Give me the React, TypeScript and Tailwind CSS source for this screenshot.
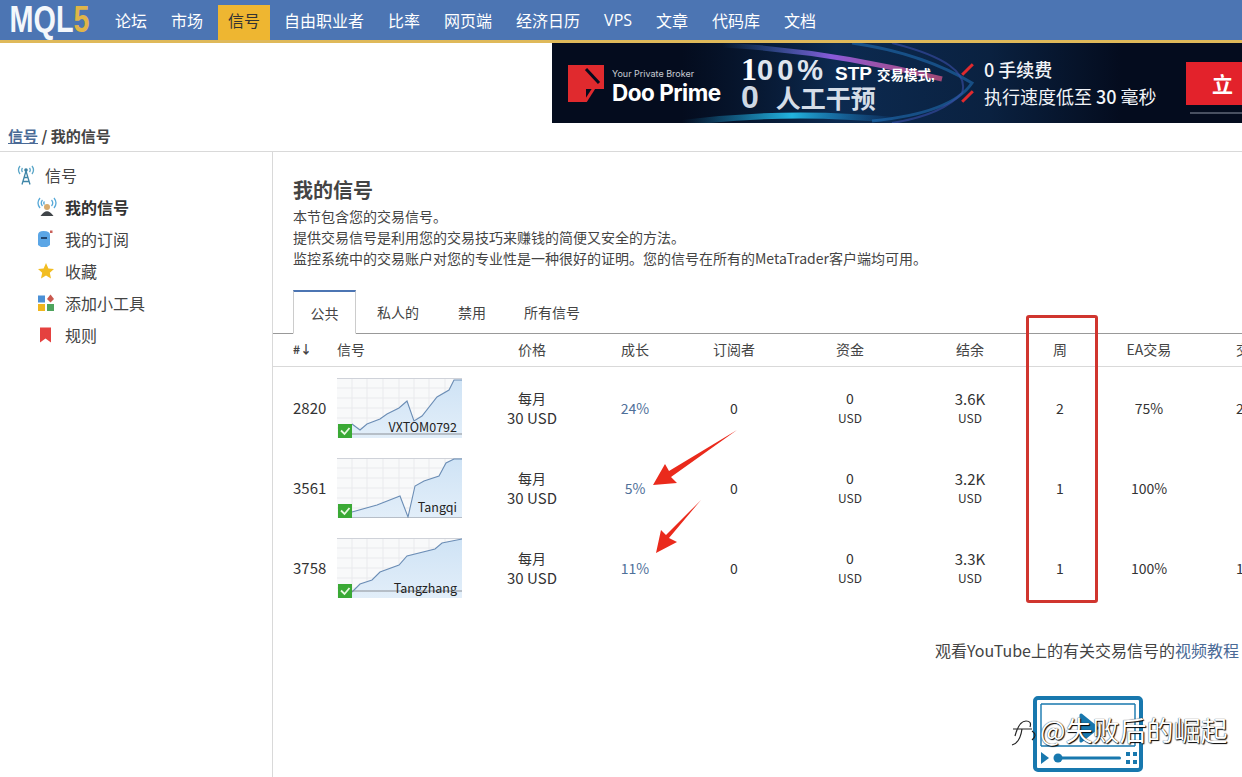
import React from 'react';

const navItems = ['论坛', '市场', '信号', '自由职业者', '比率', '网页端', '经济日历', 'VPS', '文章', '代码库', '文档'];

const cols = 'grid grid-cols-[64px_150px_90px_116px_82px_150px_90px_90px_88px_94px] items-center';

const signals = [
  {
    id: '2820',
    name: 'VXTOM0792',
    line: '15,46 23,52 30,46 43,41 50,36 62,30 70,23 77,43 85,38 100,19 112,12 117,2 125,2',
    base: 56,
    nameClass: 'top-[41px]',
    growth: '24%',
    balance: '3.6K',
    weeks: '2',
    ea: '75%',
    last: '2',
  },
  {
    id: '3561',
    name: 'Tangqi',
    line: '15,54 40,47 63,38 71,59 78,28 87,23 102,18 109,5 117,1 125,1',
    base: 60,
    nameClass: 'top-[41px]',
    growth: '5%',
    balance: '3.2K',
    weeks: '1',
    ea: '100%',
    last: '',
  },
  {
    id: '3758',
    name: 'Tangzhang',
    line: '15,54 23,46 35,42 43,34 62,27 70,18 98,11 105,5 125,1',
    base: 53,
    nameClass: 'top-[42px]',
    growth: '11%',
    balance: '3.3K',
    weeks: '1',
    ea: '100%',
    last: '1',
  },
];

const Thumb = ({ s }: { s: (typeof signals)[number] }) => (
  <div className="relative w-[125px] h-[60px]">
    <svg width="125" height="60" viewBox="0 0 125 60" className="block">
      <defs>
        <linearGradient id={`area${s.id}`} x1="0" y1="0" x2="0" y2="1">
          <stop offset="0" stopColor="#cfe3f5" />
          <stop offset="1" stopColor="#e2eef9" />
        </linearGradient>
      </defs>
      <rect width="125" height="60" fill="#f8f9fa" />
      {[15, 30, 46, 62, 77, 92, 108].map(x => (
        <line key={x} x1={x} y1="0" x2={x} y2="60" stroke="#e9eaed" />
      ))}
      {[10, 20, 30, 40, 50].map(y => (
        <line key={y} x1="0" y1={y} x2="125" y2={y} stroke="#e9eaed" />
      ))}
      <line x1="0" y1="0.5" x2="125" y2="0.5" stroke="#cfd2d9" />
      <polygon points={`15,60 ${s.line} 125,60`} fill={`url(#area${s.id})`} />
      <polyline points={s.line} fill="none" stroke="#6b8db5" strokeWidth="1.1" />
      <line x1="15" y1={s.base} x2="125" y2={s.base} stroke="#8b8f96" strokeWidth="1" />
      <rect x="1" y="46" width="14" height="14" fill="#3aa935" />
      <path d="M4 52.5 L7.5 56 L12.5 50" fill="none" stroke="#e8f8e0" strokeWidth="1.8" />
    </svg>
    <span className={`absolute right-[5px] text-[12.5px] leading-[16px] text-[#222] ${s.nameClass}`}>{s.name}</span>
  </div>
);

const TowerIcon = () => (
  <svg width="18" height="20" viewBox="0 0 18 20" fill="none" stroke="#5aa6c8" strokeWidth="1.3">
    <path d="M3 1 Q0 5 3 9 M15 1 Q18 5 15 9 M5.5 3 Q4 5 5.5 7 M12.5 3 Q14 5 12.5 7" />
    <circle cx="9" cy="5" r="1.8" fill="#3b7f9f" stroke="none" />
    <path d="M9 6 L5 19.5 M9 6 L13 19.5 M7 12.5 H11 M6 16.5 H12" stroke="#3f86a8" />
  </svg>
);

const MySignalIcon = () => (
  <svg width="20" height="20" viewBox="0 0 20 20" fill="none">
    <path d="M3 1 Q-1 6 3 11 M5.5 3 Q3 6 5.5 9 M7.5 4.5 Q6 6 7.5 7.5" stroke="#58a9d8" strokeWidth="1.3" />
    <path d="M17 1 Q21 6 17 11 M14.5 3 Q17 6 14.5 9" stroke="#58a9d8" strokeWidth="1.3" />
    <circle cx="10" cy="10" r="3" fill="#d8ab6e" />
    <path d="M3.5 19 Q10 9.5 16.5 19 Z" fill="#404549" />
  </svg>
);

const SubscribeIcon = () => (
  <svg width="16" height="18" viewBox="0 0 16 18">
    <path d="M1 5 Q1 1 6.5 1 Q13 1 13 5 V15 L10 17 H4 L1 15 Z" fill="#5ba6e6" />
    <rect x="4" y="7" width="6" height="2" fill="#23466e" />
    <rect x="13" y="0.5" width="2.5" height="2.5" fill="#c9605a" />
  </svg>
);

const StarIcon = () => (
  <svg width="18" height="18" viewBox="0 0 18 18">
    <path d="M9 1 L11.4 6.4 L17 7 L12.8 10.8 L14 16.5 L9 13.6 L4 16.5 L5.2 10.8 L1 7 L6.6 6.4 Z" fill="#f2bd22" />
  </svg>
);

const WidgetIcon = () => (
  <svg width="18" height="18" viewBox="0 0 18 18">
    <rect x="1" y="1.5" width="7" height="7" fill="#4a90d6" />
    <path d="M13.5 0.5 L17 5 L13.5 8.5 L10 5 Z" fill="#c9584e" />
    <rect x="1" y="10" width="7" height="7" fill="#f0b61f" />
    <rect x="10" y="10" width="7" height="7" fill="#4ea45d" />
  </svg>
);

const BookmarkIcon = () => (
  <svg width="18" height="16" viewBox="0 0 18 16">
    <path d="M3 0.5 H14 V15.5 L8.5 11.5 L3 15.5 Z" fill="#e5413f" />
  </svg>
);

const sideItems = [
  { label: '我的信号', icon: <MySignalIcon />, active: true },
  { label: '我的订阅', icon: <SubscribeIcon /> },
  { label: '收藏', icon: <StarIcon /> },
  { label: '添加小工具', icon: <WidgetIcon /> },
  { label: '规则', icon: <BookmarkIcon /> },
];

const Banner = () => (
  <div className="relative w-[690px] h-[80px] overflow-hidden bg-[#040c1e] flex items-center text-white">
    <svg width="690" height="80" viewBox="0 0 690 80" className="absolute inset-0">
      <defs>
        <linearGradient id="swoosh" x1="0" x2="1">
          <stop offset="0" stopColor="#2a7fd0" stopOpacity="0" />
          <stop offset="0.5" stopColor="#8a5ad8" />
          <stop offset="1" stopColor="#e0578a" stopOpacity="0.7" />
        </linearGradient>
        <linearGradient id="glow" x1="0" x2="1">
          <stop offset="0" stopColor="#1aa0e0" stopOpacity="0" />
          <stop offset="0.5" stopColor="#25c4f0" stopOpacity="0.9" />
          <stop offset="1" stopColor="#1a6fd0" stopOpacity="0" />
        </linearGradient>
        <linearGradient id="band" x1="0" x2="1">
          <stop offset="0" stopColor="#0a2140" stopOpacity="0" />
          <stop offset="0.35" stopColor="#0c2a50" />
          <stop offset="0.7" stopColor="#0a2140" />
          <stop offset="1" stopColor="#0a2140" stopOpacity="0" />
        </linearGradient>
      </defs>
      <rect x="130" width="440" height="80" fill="url(#band)" />
      <path d="M170 2 Q280 8 390 36" stroke="url(#swoosh)" strokeWidth="5" fill="none" />
      <path d="M300 0 Q370 10 420 40 Q400 70 320 78" stroke="#1f6db0" strokeWidth="3" fill="none" opacity="0.6" />
      <path d="M340 0 Q420 20 410 50 Q390 72 340 80" stroke="#3a4fa8" strokeWidth="2" fill="none" opacity="0.6" />
      <path d="M130 80 Q240 66 350 78" stroke="url(#glow)" strokeWidth="6" fill="none" />
      <rect x="638" y="69" width="52" height="2" fill="#8b93a3" opacity="0.5" />
    </svg>
    <div className="relative flex items-center w-full h-full pl-[16px]">
      <svg width="36" height="37" viewBox="0 0 36 37" className="shrink-0">
        <path d="M0 0 H36 V24 H18 V37 H0 Z" fill="#e02a2e" />
        <path d="M18 4 L31 18" stroke="#040c1e" strokeWidth="3" />
        <path d="M26 23 L17 37" stroke="#e02a2e" strokeWidth="3" />
      </svg>
      <div className="ml-[8px] w-[112px] shrink-0 pt-[8px] font-['Inter',sans-serif]">
        <div className="text-[9px] leading-[11px] text-[#c8ccd4]">Your Private Broker</div>
        <div className="text-[22.5px] leading-[26px] font-bold tracking-[-0.5px] whitespace-nowrap mt-[1px]">Doo Prime</div>
      </div>
      <div className="ml-[17px] w-[204px] shrink-0 font-['Liberation_Sans','Noto_Sans_CJK_SC',sans-serif] font-bold whitespace-nowrap">
        <div className="h-[28px] leading-[28px]">
          <span className="text-[32px] font-['Liberation_Serif','Noto_Sans_CJK_SC',serif]">1</span>
          <span className="text-[29px] tracking-[4px] text-[#dfe5ee]">00%</span>
          <span className="text-[19px] ml-[8px]">STP</span>
          <span className="text-[13.5px] ml-[5px]">交易模式,</span>
        </div>
        <div className="h-[28px] leading-[28px]">
          <span className="text-[32px] text-[#cfd8e4]">0</span>
          <span className="text-[25px] ml-[17px] text-[#d5dde8]">人工干预</span>
        </div>
      </div>
      <div className="ml-[17px] text-[#f2f4f8] font-['Noto_Sans_CJK_SC',sans-serif] whitespace-nowrap">
        <div className="flex items-center h-[27px] text-[18px]">
          <span className="w-[3px] h-[15px] bg-[#e02a2e] rotate-45 mr-[15px] ml-[4px]" />
          <span className="font-medium">0 手续费</span>
        </div>
        <div className="flex items-center h-[27px] text-[18px]">
          <span className="w-[3px] h-[15px] bg-[#e02a2e] rotate-45 mr-[15px] ml-[4px]" />
          <span>执行速度低至 <b className="font-medium">30</b> 毫秒</span>
        </div>
      </div>
      <div className="absolute left-[634px] top-[19px] w-[60px] h-[43px] bg-[#e3222b] flex items-center pl-[26px] text-[21px] font-bold font-['Noto_Sans_CJK_SC',sans-serif]">
        立
      </div>
    </div>
  </div>
);

const VideoIcon = () => (
  <svg width="110" height="76" viewBox="0 0 110 76" className="block">
    <rect x="2" y="2" width="106" height="72" rx="3" fill="#fff" stroke="#1878ae" strokeWidth="4" />
    <path d="M8 8 V50 M102 8 V50 M8 8 H102 M8 50 H102" stroke="#1878ae" strokeWidth="1.4" fill="none" />
    <path d="M48 19 L64 32 L48 45 Z" fill="#1878ae" stroke="#1878ae" strokeWidth="3" strokeLinejoin="round" />
    <path d="M8 56 L16 62 L8 68 Z" fill="#1878ae" />
    <circle cx="25" cy="62" r="4.5" fill="#1878ae" />
    <rect x="25" y="60.5" width="63" height="3" rx="1.5" fill="#1878ae" />
    <rect x="93" y="56" width="4" height="4" fill="#1878ae" />
    <rect x="100" y="56" width="4" height="4" fill="#1878ae" />
    <rect x="93" y="64" width="4" height="4" fill="#1878ae" />
    <rect x="100" y="64" width="4" height="4" fill="#1878ae" />
  </svg>
);

export default function App() {
  return (
    <div className="relative w-[1242px] h-[777px] overflow-hidden bg-white text-[#333] font-['Noto_Sans_CJK_SC',sans-serif]">
      {/* top nav */}
      <div className="h-[43px] bg-[#4c75b3] border-b-[3px] border-[#dfb95a] flex items-end">
        <div className="w-[103px] pl-[12px] h-[40px] flex items-center font-['Liberation_Sans',sans-serif] font-bold text-[36px] origin-left scale-x-[0.8] whitespace-nowrap">
          <span className="text-[#f3f7fb]">MQL</span>
          <span className="text-[#e0b548]">5</span>
        </div>
        <div className="flex h-[40px]">
          {navItems.map(item => (
            <div
              key={item}
              className={`text-[16px] pt-[2px] leading-[26px] h-[35px] self-end ${
                item === '信号' ? 'bg-[#eeb631] text-[#333] px-[10px] ml-[3px] mr-[2px]' : 'px-[12px] text-white'
              } ${item === 'VPS' ? 'font-["Open_Sans",sans-serif] text-[14px]' : ''}`}
            >
              {item}
            </div>
          ))}
        </div>
      </div>

      <div className="h-[80px] flex justify-end">
        <Banner />
      </div>

      {/* breadcrumb */}
      <div className="h-[29px] border-b border-[#d9d9d9] pl-[8px] pt-[1px] text-[15px] leading-[24px] font-bold text-[#444]">
        <a className="underline text-[#4a6a96]">信号</a>
        <span> / 我的信号</span>
      </div>

      <div className="flex h-[625px]">
        {/* sidebar */}
        <div className="w-[273px] shrink-0 border-r border-[#d9d9d9] pt-[7px]">
          <div className="flex items-center h-[32px] pl-[17px] gap-[10px] text-[16px] text-[#444]">
            <TowerIcon />
            <span>信号</span>
          </div>
          {sideItems.map(item => (
            <div key={item.label} className="flex items-center h-[32px] pl-[37px] text-[16px] text-[#444]">
              <span className="w-[28px] flex items-center">{item.icon}</span>
              <span className={item.active ? 'font-bold text-[#333]' : ''}>{item.label}</span>
            </div>
          ))}
        </div>

        {/* content */}
        <div className="flex-1 min-w-0 pt-[26px]">
          <div className="pl-[20px]">
            <h1 className="text-[20px] leading-[24px] font-bold text-[#444]">我的信号</h1>
            <div className="mt-[4px] text-[14px] leading-[21px] text-[#444]">
              <p>本节包含您的交易信号。</p>
              <p>提供交易信号是利用您的交易技巧来赚钱的简便又安全的方法。</p>
              <p>监控系统中的交易账户对您的专业性是一种很好的证明。您的信号在所有的MetaTrader客户端均可用。</p>
            </div>
          </div>

          {/* tabs */}
          <div className="mt-[21px] h-[44px] border-b border-[#999] flex pl-[20px] text-[14px] text-[#444]">
            <div className="w-[63px] h-[44px] pt-[1px] border border-[#ccc] border-b-white border-t-2 border-t-[#4c75b3] flex items-center justify-center bg-white">
              公共
            </div>
            <div className="w-[84px] pt-[1px] flex items-center justify-center">私人的</div>
            <div className="w-[64px] pt-[1px] flex items-center justify-center">禁用</div>
            <div className="w-[96px] pt-[1px] flex items-center justify-center">所有信号</div>
          </div>

          {/* table */}
          <div className="w-[969px] overflow-hidden">
            <div className={`${cols} w-[1014px] h-[33px] pb-[2px] border-b border-[#d9d9d9] text-[14px] text-[#444]`}>
              <div className="pl-[20px] font-bold text-[12px]">#↓</div>
              <div>信号</div>
              <div className="text-center">价格</div>
              <div className="text-center">成长</div>
              <div className="text-center">订阅者</div>
              <div className="text-center">资金</div>
              <div className="text-center">结余</div>
              <div className="text-center">周</div>
              <div className="text-center">EA交易</div>
              <div className="pl-[43px] whitespace-nowrap">交易</div>
            </div>
            <div className="pt-[1px]">
              {signals.map(s => (
                <div key={s.id} className={`${cols} w-[1014px] h-[80px] text-[15px] text-[#333]`}>
                  <div className="pl-[20px] pt-[1px]">{s.id}</div>
                  <Thumb s={s} />
                  <div className="text-center leading-[19px]">
                    <div className="text-[14px]">每月</div>
                    <div>30 USD</div>
                  </div>
                  <div className="text-center text-[14px] text-[#4f7099]">{s.growth}</div>
                  <div className="text-center text-[14px]">0</div>
                  <div className="text-center leading-[19px] text-[14px]">
                    <div>0</div>
                    <div className="text-[12px]">USD</div>
                  </div>
                  <div className="text-center leading-[19px]">
                    <div>{s.balance}</div>
                    <div className="text-[12px]">USD</div>
                  </div>
                  <div className="text-center text-[14px]">{s.weeks}</div>
                  <div className="text-center text-[14px]">{s.ea}</div>
                  <div className="pl-[43px] text-[14px]">{s.last}</div>
                </div>
              ))}
            </div>
          </div>

          {/* video link */}
          <div className="mt-[30px] pr-[3px] text-right text-[16px] leading-[24px] text-[#444]">
            观看YouTube上的有关交易信号的<a className="text-[#4a6a96]">视频教程</a>
          </div>
          <div className="mt-[34px] ml-[760px]">
            <VideoIcon />
          </div>
        </div>
      </div>

      {/* annotations over the page */}
      <div className="absolute left-[1026px] top-[315px] w-[72px] h-[288px] border-[3px] border-[#d0352f] rounded-[3px]" />
      <svg width="110" height="130" viewBox="0 0 110 130" className="absolute left-[645px] top-[428px]">
        <path d="M92 2 L26 49 L32 55 L8 57 L20 36 L24 43 Z" fill="#ea2a1c" />
        <path d="M56 72 L24 110 L32 114 L11 125 L16 102 L21 107 Z" fill="#ea2a1c" />
      </svg>
      <div className="absolute left-[1010px] top-[713px] flex items-center text-[27px] leading-[34px] text-white [text-shadow:0_0_1px_#000,1px_1px_1px_#000]">
        <svg width="30" height="34" viewBox="0 0 30 34" fill="none" stroke="#222" strokeWidth="1.2">
          <path d="M5 23 Q9 8 16 8 Q22 8 20 14 M3 16 H22 M12 16 Q10 30 2 32 M22 18 Q28 22 22 27" />
        </svg>
        <span>@失败后的崛起</span>
      </div>
    </div>
  );
}
